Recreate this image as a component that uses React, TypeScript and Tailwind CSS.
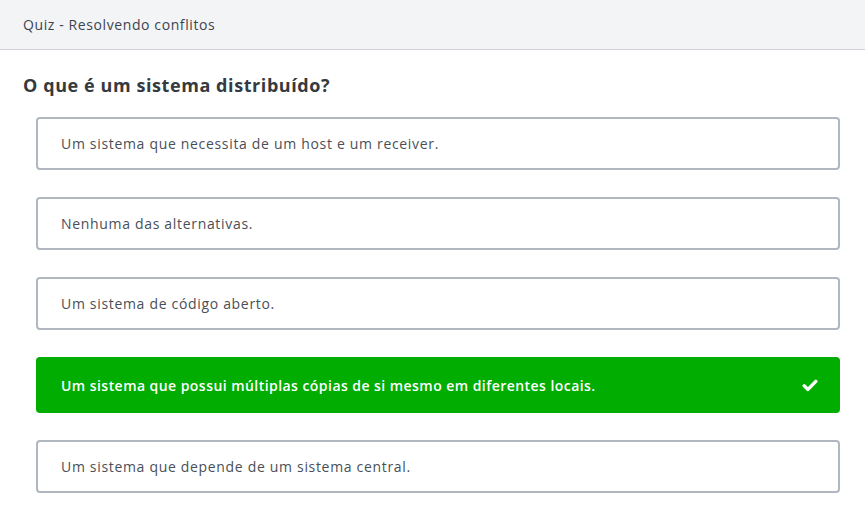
import React from 'react';

const OPTIONS = [
  { id: 'a', text: 'Um sistema que necessita de um host e um receiver.' },
  { id: 'b', text: 'Nenhuma das alternativas.' },
  { id: 'c', text: 'Um sistema de código aberto.' },
  { id: 'd', text: 'Um sistema que possui múltiplas cópias de si mesmo em diferentes locais.', correct: true },
  { id: 'e', text: 'Um sistema que depende de um sistema central.' },
];

function CheckMark() {
  return (
    <svg width="16" height="13" viewBox="0 0 16 13" fill="none">
      <polyline
        points="2.2,6.8 6,10.4 13.8,2.4"
        stroke="white"
        strokeWidth="3.4"
        strokeLinecap="round"
        strokeLinejoin="round"
      />
    </svg>
  );
}

export default function App() {
  return (
    <div className="min-h-screen bg-white font-['Open_Sans',sans-serif]">
      {/* Top bar */}
      <div className="h-[50px] bg-[#f3f4f6] border-b border-[#cfd3d8] flex items-center px-[23px]">
        <span className="text-[14px] tracking-[0.6px] text-[#3d4450]">Quiz - Resolvendo conflitos</span>
      </div>

      <div className="px-[23px] pt-[22px]">
        <h1 className="text-[18px] font-bold tracking-[0.58px] text-[#343a40] leading-[26px]">
          O que é um sistema distribuído?
        </h1>

        <div className="mt-[19px] ml-[13px] mr-[2px] flex flex-col gap-[27px]">
          {OPTIONS.map((opt) =>
            opt.correct ? (
              <div
                key={opt.id}
                className="h-[56px] rounded-[4px] bg-[#00ad00] flex items-center justify-between pl-[25px] pr-[22px]"
              >
                <span className="text-[14px] font-semibold tracking-[0.45px] text-white">{opt.text}</span>
                <CheckMark />
              </div>
            ) : (
              <div
                key={opt.id}
                className="h-[53px] rounded-[4px] border-2 border-[#b1b7bf] bg-white flex items-center pl-[23px]"
              >
                <span className="text-[14px] tracking-[0.68px] text-[#4a4f57]">{opt.text}</span>
              </div>
            )
          )}
        </div>
      </div>
    </div>
  );
}
